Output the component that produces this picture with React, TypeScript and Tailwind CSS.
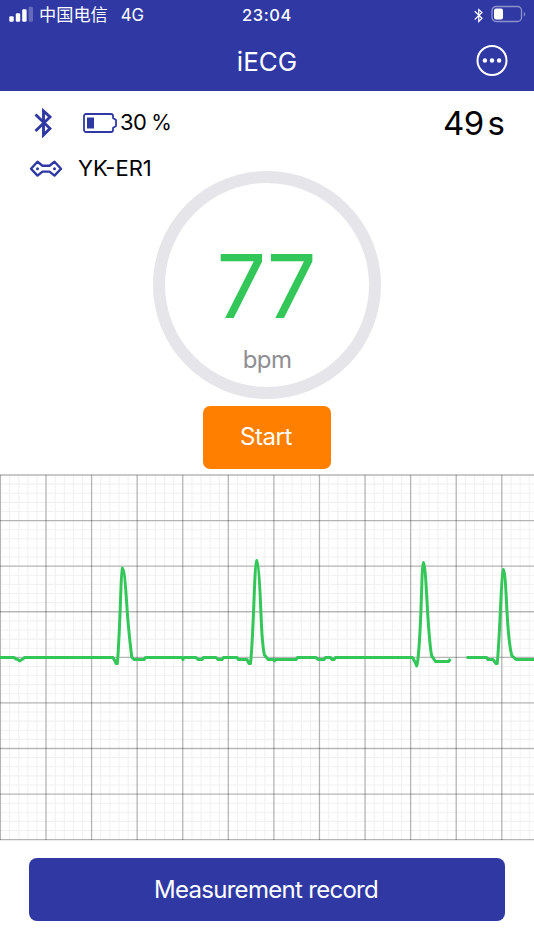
import type { ReactNode } from "react";

const MAJOR = 45.58;
const MINOR = MAJOR / 5;

// Trace of the two sweeps, in chart coordinates
const TRACE =
  "M0 183.5H14L16 185L18 185.5L19.5 187L21 186L23 185L24.5 183.5H113L115 187L116 189.5H117.3" +
  "C118.3 180 119.2 160 120.3 133C121.2 105 121.5 95 122.4 94C124 94 125.3 108 127 134C128.5 157 130.3 170 131.7 183" +
  "L134 185.5H144L145.5 183.5H182L183 185.5L184 183.5H196L198 185.5H202L203.5 183.5H216L218 185.5H222L223.5 183.5" +
  "H237L238.5 185.5H247L249 189.5H250.5C252 176 252.7 158 253.6 136C254.7 108 255.5 87 256.8 86.5" +
  "C258.2 87 259.7 108 260.9 138C261.8 162 262.8 175 264.5 181L267 184L268 185.5H273.5L274.5 187L275.5 185.5H296L297.5 183.5" +
  "H316L318 185.5H324L325.5 183.5H330.5L332 185.5H334L335.5 183.5H412.5L415 188L416.7 192" +
  "C419 185 420 160 421 136C422 104 422.4 89 423.5 88.5C424.8 89 426 108 427.6 138C429 160 430.4 176 431.7 182" +
  "L433.5 184.5L435.5 187.5H448.5L450.5 185";

const TRACE_PREVIOUS =
  "M466.5 183.5H486.5L488 185.5H493L496 189.5H497.2C498.7 175 499.8 150 500.8 128C501.8 106 502.4 96 503.3 95.5" +
  "C504.8 96 505.8 113 507 138C508.5 164 510 176 512 182L514 183.5L516 185.5H534";

function Bluetooth({ className, strokeWidth }: { className: string; strokeWidth: number }) {
  return (
    <svg viewBox="0 0 18 30" className={className} fill="none" stroke="currentColor" strokeWidth={strokeWidth}>
      <path d="M1.5 6.5L16 20.5L9.5 27V3L16 9L1.5 23" />
    </svg>
  );
}

function StatusBar() {
  return (
    <div className="grid h-[30px] grid-cols-3 items-center">
      <div className="flex items-center pl-[9px]">
        <svg viewBox="0 0 24 16" className="h-4 w-6 -translate-y-px" fill="currentColor">
          <rect x="0.3" y="10.3" width="4.4" height="5.4" rx="1.2" />
          <rect x="6.8" y="7.3" width="4.4" height="8.4" rx="1.2" />
          <rect x="13.2" y="3.3" width="4.4" height="12.4" rx="1.2" />
          <rect x="19.6" y="0.8" width="4.4" height="14.9" rx="1.2" opacity="0.25" />
        </svg>
        <span className="ml-[6px] text-[17.2px] leading-none whitespace-nowrap">中国电信</span>
        <span className="ml-[13px] text-[16.8px] leading-none">4G</span>
      </div>
      <span className="text-center text-[16.5px] font-medium tracking-[0.6px]">23:04</span>
      <div className="flex items-center justify-end pr-[8px]">
        <Bluetooth className="h-[15px] w-[9px]" strokeWidth={2.4} />
        <svg viewBox="0 0 35 18" className="ml-[8px] h-[18px] w-[35px] -translate-y-px" fill="none">
          <rect x="1" y="1.5" width="29.5" height="15" rx="4" stroke="currentColor" strokeOpacity="0.45" strokeWidth="1.3" />
          <rect x="3" y="3.5" width="9" height="11" rx="2" fill="currentColor" />
          <path d="M32.8 7v4.5c1-.4 1.4-1.2 1.4-2.2S33.8 7.4 32.8 7z" fill="currentColor" fillOpacity="0.45" />
        </svg>
      </div>
    </div>
  );
}

function Row({ children, className }: { children: ReactNode; className: string }) {
  return <div className={`flex items-center ${className}`}>{children}</div>;
}

function EcgChart() {
  const lines = Array.from({ length: 60 }, (_, i) => i);

  return (
    <svg viewBox="0 0 534 367" className="mt-[5px] block h-[367px] w-full" fill="none">
      <g stroke="#f1f1f1" strokeWidth="1.1">
        {lines.map((i) => (
          <path key={i} d={`M${0.5 + i * MINOR} 1V366`} />
        ))}
        {lines.slice(0, 41).map((i) => (
          <path key={i} d={`M0 ${1 + i * MINOR}H534`} />
        ))}
      </g>
      <g stroke="#000" strokeOpacity="0.25" strokeWidth="1.3">
        {lines.slice(0, 12).map((i) => (
          <path key={i} d={`M${0.4 + i * MAJOR} 1V366`} />
        ))}
        {lines.slice(0, 9).map((i) => (
          <path key={i} d={`M0 ${1 + i * MAJOR}H534`} />
        ))}
      </g>
      <g stroke="#33c759" strokeWidth="3" strokeLinejoin="round">
        <path d={TRACE} />
        <path d={TRACE_PREVIOUS} />
      </g>
    </svg>
  );
}

export default function App() {
  return (
    <div className="flex h-[950px] w-[534px] flex-col overflow-hidden bg-white font-['Inter','Noto_Sans_CJK_SC',sans-serif] text-black">
      <header className="h-[91px] bg-[#3039a3] text-white">
        <StatusBar />
        <div className="grid h-[61px] grid-cols-3 items-center">
          <h1 className="col-start-2 pt-[2px] text-center text-[26px] leading-none">iECG</h1>
          <button className="mr-[26px] justify-self-end">
            <svg viewBox="0 0 32 32" className="h-8 w-8" fill="currentColor">
              <circle cx="16" cy="15.5" r="14.5" fill="none" stroke="currentColor" strokeWidth="2" />
              <circle cx="8.9" cy="15.5" r="2.2" />
              <circle cx="16" cy="15.5" r="2.2" />
              <circle cx="23.1" cy="15.5" r="2.2" />
            </svg>
          </button>
        </div>
      </header>

      <main className="flex flex-1 flex-col">
        <Row className="h-[63px] pl-[34px] pr-[29px]">
          <Bluetooth className="h-[30px] w-[18px] text-[#3039a3]" strokeWidth={2.9} />
          <svg viewBox="0 0 36 22" className="ml-[30px] h-[22px] w-9 text-[#3039a3]" fill="none">
            <path
              d="M4 2H29a2 2 0 0 1 2 2V6L34 8V14L31 16V18a2 2 0 0 1-2 2H4a2 2 0 0 1-2-2V4a2 2 0 0 1 2-2z"
              stroke="currentColor"
              strokeWidth="1.8"
            />
            <rect x="5" y="5.5" width="7" height="11" fill="currentColor" />
          </svg>
          <span className="ml-[2px] text-[22px] tracking-[-0.6px]">30</span>
          <span className="ml-[5px] text-[21px]">%</span>
          <span className="ml-auto pt-[2px] text-[33px] tracking-[-0.6px]">49</span>
          <span className="ml-[4px] pt-[2px] text-[33px]">s</span>
        </Row>
        <Row className="h-[29px] pl-[29px]">
          <svg viewBox="0 0 34 18" className="h-[18px] w-[34px] text-[#3039a3]" fill="none">
            <path
              d="M8.5 1.8L2 8.7L8.5 15.6L13.5 11.6H20.5L25.5 15.6L32 8.7L25.5 1.8L20.5 5.8H13.5Z"
              stroke="currentColor"
              strokeWidth="2.4"
              strokeLinejoin="round"
            />
            <circle cx="8.5" cy="8.7" r="1.5" fill="currentColor" />
            <circle cx="25.5" cy="8.7" r="1.5" fill="currentColor" />
          </svg>
          <span className="ml-[15px] text-[22px]">YK-ER1</span>
        </Row>

        {/* Heart rate ring */}
        <div className="-mt-[12px] flex size-[228px] shrink-0 flex-col items-center self-center rounded-full border-[12px] border-[#e5e5ea]">
          <span className="mt-[59px] pr-[2px] text-[88px] leading-[88px] tracking-[-1.2px] text-[#33c759]">77</span>
          <span className="mt-[14px] text-[24px] leading-[32px] tracking-[-0.6px] text-[#8e8e93]">bpm</span>
        </div>

        <button className="mt-[7px] h-[63px] w-32 shrink-0 self-center rounded-[7px] bg-[#ff8000] pr-[2px] pb-[2px] text-[24px] tracking-[-0.4px] text-white">
          Start
        </button>

        <EcgChart />

        <button className="mx-[29px] mt-[17px] h-[63px] shrink-0 rounded-[8px] bg-[#3039a3] pr-[2px] text-[24px] tracking-[-0.7px] text-white">
          Measurement record
        </button>
      </main>
    </div>
  );
}
